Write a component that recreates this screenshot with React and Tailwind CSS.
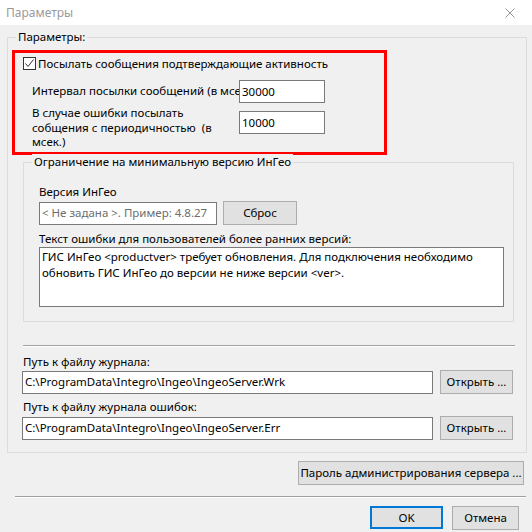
import React from "react";

const font = { fontFamily: '"Noto Sans", "Open Sans", sans-serif' };

const Input = ({ className = "", children, muted }) => (
  <div
    className={`h-[23px] bg-white border border-[#7a7a7a] flex items-center px-[2px] whitespace-nowrap overflow-hidden ${
      muted ? "text-[#6d6d6d]" : "text-black"
    } ${className}`}
  >
    {children}
  </div>
);

const Button = ({ className = "", children }) => (
  <div
    className={`h-[24px] bg-[#e1e1e1] border border-[#adadad] flex items-center justify-center whitespace-nowrap ${className}`}
  >
    {children}
  </div>
);

export default function App() {
  return (
    <div
      className="w-[532px] h-[532px] bg-[#f0f0f0] text-[11.5px] leading-[16px] text-black overflow-hidden"
      style={font}
    >
      {/* title bar */}
      <div className="h-[25px] bg-white flex items-center justify-between pl-[6px] pr-[17px]">
        <span className="text-[#999999] text-[12px]">Параметры</span>
        <svg width="10" height="10" viewBox="0 0 10 10">
          <path d="M0.5 0.5 L9.5 9.5 M9.5 0.5 L0.5 9.5" stroke="#999999" strokeWidth="1" />
        </svg>
      </div>

      {/* outer group */}
      <div className="relative ml-[7px] mt-[12px] w-[520px] h-[416px] border border-[#dcdcdc] flex flex-col">
        <span className="absolute left-[8px] top-[-9px] bg-[#f0f0f0] px-[2px]">Параметры:</span>

        {/* highlighted block */}
        <div className="ml-[4px] mt-[12px] w-[375px] h-[105px] border-[3px] border-[#ff0000] flex flex-col">
          <div className="flex items-center ml-[8px] mt-[4px] h-[13px]">
            <div className="w-[13px] h-[13px] border border-[#333333] bg-white flex items-center justify-center">
              <svg width="11" height="11" viewBox="0 0 11 11">
                <path d="M1.5 5.5 L4 8.5 L9.5 1.5" fill="none" stroke="#333333" strokeWidth="1" />
              </svg>
            </div>
            <span className="ml-[2px] whitespace-nowrap">Посылать сообщения подтверждающие активность</span>
          </div>
          <div className="flex items-center ml-[17px] mt-[10px] h-[23px]">
            <div className="w-[207px] whitespace-nowrap -mt-[2px]">Интервал посылки сообщений (в мсе</div>
            <Input className="w-[86px]">30000</Input>
          </div>
          <div className="flex items-start ml-[17px] mt-[3px]">
            <div className="w-[207px] leading-[14.5px]">
              <div>В случае ошибки посылать</div>
              <div>собщения с периодичностью&nbsp; (в</div>
              <div>мсек.)</div>
            </div>
            <Input className="w-[86px] mt-[5px]">10000</Input>
          </div>
        </div>

        {/* version restriction group */}
        <div className="relative ml-[15px] mt-[7px] w-[491px] h-[160px] border border-[#dcdcdc] flex flex-col pl-[15px]">
          <span className="absolute left-[8px] top-[-9px] bg-[#f0f0f0] px-[2px]">
            Ограничение на минимальную версию ИнГео
          </span>
          <div className="mt-[21px]">Версия ИнГео</div>
          <div className="flex items-center mt-[1px] gap-[6px]">
            <Input className="w-[178px]" muted>
              &lt; Не задана &gt;. Пример: 4.8.27
            </Input>
            <Button className="w-[74px]">Сброс</Button>
          </div>
          <div className="mt-[6px]">Текст ошибки для пользователей более ранних версий:</div>
          <div className="w-[465px] h-[60px] bg-white border border-[#7a7a7a] px-[2px] pt-[1px]">
            <div>ГИС ИнГео &lt;productver&gt; требует обновления. Для подключения необходимо</div>
            <div>обновить ГИС ИнГео до версии не ниже версии &lt;ver&gt;.</div>
          </div>
        </div>

        <div className="ml-[15px] mt-[23px] w-[492px] border-t border-[#a0a0a0] border-b border-b-white" />

        <div className="ml-[15px] mt-[7px]">Путь к файлу журнала:</div>
        <div className="flex items-center ml-[14px] gap-[7px]">
          <Input className="w-[411px]">C:\ProgramData\Integro\Ingeo\IngeoServer.Wrk</Input>
          <Button className="w-[73px]">Открыть ...</Button>
        </div>
        <div className="ml-[15px] mt-[5px]">Путь к файлу журнала ошибок:</div>
        <div className="flex items-center ml-[14px] mt-[1px] gap-[7px]">
          <Input className="w-[411px]">C:\ProgramData\Integro\Ingeo\IngeoServer.Err</Input>
          <Button className="w-[73px]">Открыть ...</Button>
        </div>
      </div>

      <div className="flex justify-end pr-[8px] mt-[8px]">
        <Button className="w-[226px] h-[23px]">Пароль администрирования сервера ...</Button>
      </div>

      <div className="ml-[15px] mt-[11px] w-[511px] border-t border-[#a0a0a0] border-b border-b-white" />

      <div className="flex justify-end gap-[9px] pr-[13px] mt-[8px]">
        <div className="w-[73px] h-[23px] bg-[#e1e1e1] border-2 border-[#0078d7] flex items-center justify-center">
          OK
        </div>
        <Button className="w-[67px] h-[23px]">Отмена</Button>
      </div>
    </div>
  );
}
